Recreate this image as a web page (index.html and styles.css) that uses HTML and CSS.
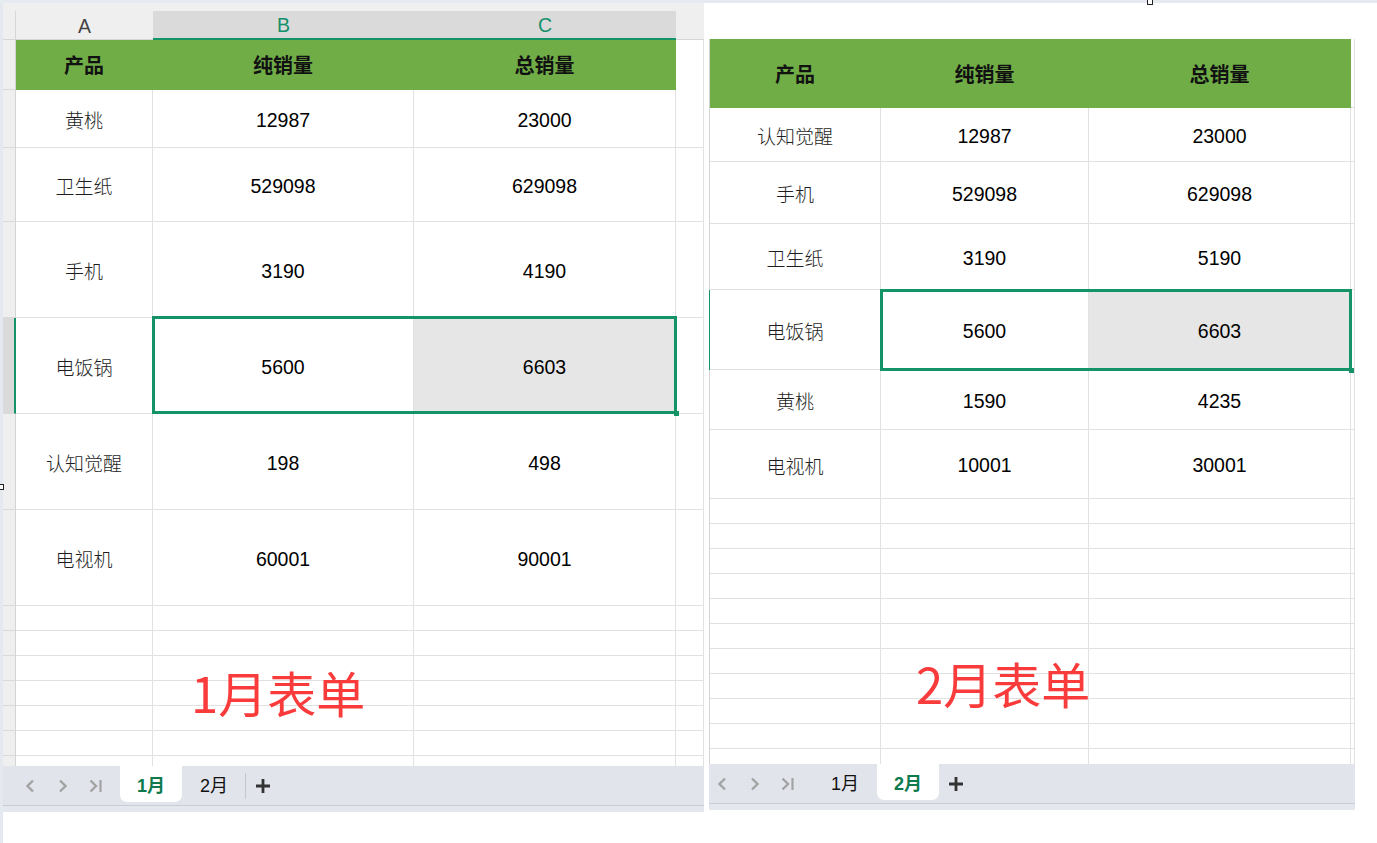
FILE: index.html
```html
<!DOCTYPE html>
<html lang="zh-CN">
<head>
<meta charset="utf-8">
<title>销量表单</title>
<link rel="stylesheet" href="styles.css">
</head>
<body>
<div class="topband"></div>
<div class="page">
  <section class="sheet sheet-left">
    <div class="colhead">
      <div class="ch corner"></div>
      <div class="ch">A</div>
      <div class="ch sel">B</div>
      <div class="ch sel">C</div>
      <div class="ch"></div>
    </div>
    <div class="grid grid-left">
      <div class="row h50 head">
        <div class="cell rh"></div><div class="cell g">产品</div><div class="cell g">纯销量</div><div class="cell g">总销量</div><div class="cell nb"></div>
      </div>
      <div class="row h58">
        <div class="cell rh"></div><div class="cell name">黄桃</div><div class="cell">12987</div><div class="cell">23000</div><div class="cell"></div>
      </div>
      <div class="row h74">
        <div class="cell rh"></div><div class="cell name">卫生纸</div><div class="cell">529098</div><div class="cell">629098</div><div class="cell"></div>
      </div>
      <div class="row h96">
        <div class="cell rh"></div><div class="cell name">手机</div><div class="cell">3190</div><div class="cell">4190</div><div class="cell"></div>
      </div>
      <div class="row h96">
        <div class="cell rh rh-sel"></div><div class="cell name">电饭锅</div><div class="cell">5600</div><div class="cell active">6603</div><div class="cell"></div>
      </div>
      <div class="row h96">
        <div class="cell rh"></div><div class="cell name">认知觉醒</div><div class="cell">198</div><div class="cell">498</div><div class="cell"></div>
      </div>
      <div class="row h96">
        <div class="cell rh"></div><div class="cell name">电视机</div><div class="cell">60001</div><div class="cell">90001</div><div class="cell"></div>
      </div>
      <div class="row h25"><div class="cell rh"></div><div class="cell"></div><div class="cell"></div><div class="cell"></div><div class="cell"></div></div>
      <div class="row h25"><div class="cell rh"></div><div class="cell"></div><div class="cell"></div><div class="cell"></div><div class="cell"></div></div>
      <div class="row h25"><div class="cell rh"></div><div class="cell"></div><div class="cell"></div><div class="cell"></div><div class="cell"></div></div>
      <div class="row h25"><div class="cell rh"></div><div class="cell"></div><div class="cell"></div><div class="cell"></div><div class="cell"></div></div>
      <div class="row h25"><div class="cell rh"></div><div class="cell"></div><div class="cell"></div><div class="cell"></div><div class="cell"></div></div>
      <div class="row h25"><div class="cell rh"></div><div class="cell"></div><div class="cell"></div><div class="cell"></div><div class="cell"></div></div>
      <div class="row h25"><div class="cell rh"></div><div class="cell"></div><div class="cell"></div><div class="cell"></div><div class="cell"></div></div>
      <div class="selection sel-left"><span class="fill-handle"></span></div>
      <div class="label label-left">1月表单</div>
    </div>
    <div class="tabbar tabbar-left">
      <div class="nav first"><svg width="12" height="14" viewBox="0 0 12 14"><path d="M9 1.5 L3.5 7 L9 12.5" fill="none" stroke="#a3a3a3" stroke-width="2.4"/></svg></div>
      <div class="nav"><svg width="12" height="14" viewBox="0 0 12 14"><path d="M3 1.5 L8.5 7 L3 12.5" fill="none" stroke="#a3a3a3" stroke-width="2.4"/></svg></div>
      <div class="nav"><svg width="14" height="14" viewBox="0 0 14 14"><path d="M1.5 1.5 L7 7 L1.5 12.5" fill="none" stroke="#a3a3a3" stroke-width="2.4"/><path d="M11.5 1 V13" stroke="#a3a3a3" stroke-width="2.2"/></svg></div>
      <div class="tab active-tab tab-first">1月</div>
      <div class="tab">2月</div>
      <div class="sep"></div>
      <div class="add"><svg width="16" height="16" viewBox="0 0 16 16"><path d="M8 1 V15 M1 8 H15" stroke="#333" stroke-width="2.8"/></svg></div>
    </div>
    <div class="tabstrip"></div>
  </section>

  <section class="sheet sheet-right">
    <div class="topspace"></div>
    <div class="grid grid-right">
      <div class="row h69 head">
        <div class="cell rh"></div><div class="cell g">产品</div><div class="cell g">纯销量</div><div class="cell g">总销量</div><div class="cell"></div>
      </div>
      <div class="row h54">
        <div class="cell rh"></div><div class="cell name">认知觉醒</div><div class="cell">12987</div><div class="cell">23000</div><div class="cell"></div>
      </div>
      <div class="row h62">
        <div class="cell rh"></div><div class="cell name">手机</div><div class="cell">529098</div><div class="cell">629098</div><div class="cell"></div>
      </div>
      <div class="row h66">
        <div class="cell rh"></div><div class="cell name">卫生纸</div><div class="cell">3190</div><div class="cell">5190</div><div class="cell"></div>
      </div>
      <div class="row h80">
        <div class="cell rh rh-sel"></div><div class="cell name">电饭锅</div><div class="cell">5600</div><div class="cell active">6603</div><div class="cell"></div>
      </div>
      <div class="row h60">
        <div class="cell rh"></div><div class="cell name">黄桃</div><div class="cell">1590</div><div class="cell">4235</div><div class="cell"></div>
      </div>
      <div class="row h69">
        <div class="cell rh"></div><div class="cell name">电视机</div><div class="cell">10001</div><div class="cell">30001</div><div class="cell"></div>
      </div>
      <div class="row h25"><div class="cell rh"></div><div class="cell"></div><div class="cell"></div><div class="cell"></div><div class="cell"></div></div>
      <div class="row h25"><div class="cell rh"></div><div class="cell"></div><div class="cell"></div><div class="cell"></div><div class="cell"></div></div>
      <div class="row h25"><div class="cell rh"></div><div class="cell"></div><div class="cell"></div><div class="cell"></div><div class="cell"></div></div>
      <div class="row h25"><div class="cell rh"></div><div class="cell"></div><div class="cell"></div><div class="cell"></div><div class="cell"></div></div>
      <div class="row h25"><div class="cell rh"></div><div class="cell"></div><div class="cell"></div><div class="cell"></div><div class="cell"></div></div>
      <div class="row h25"><div class="cell rh"></div><div class="cell"></div><div class="cell"></div><div class="cell"></div><div class="cell"></div></div>
      <div class="row h25"><div class="cell rh"></div><div class="cell"></div><div class="cell"></div><div class="cell"></div><div class="cell"></div></div>
      <div class="row h25"><div class="cell rh"></div><div class="cell"></div><div class="cell"></div><div class="cell"></div><div class="cell"></div></div>
      <div class="row h25"><div class="cell rh"></div><div class="cell"></div><div class="cell"></div><div class="cell"></div><div class="cell"></div></div>
      <div class="row h25"><div class="cell rh"></div><div class="cell"></div><div class="cell"></div><div class="cell"></div><div class="cell"></div></div>
      <div class="row h25"><div class="cell rh"></div><div class="cell"></div><div class="cell"></div><div class="cell"></div><div class="cell"></div></div>
      <div class="selection sel-right"><span class="fill-handle"></span></div>
      <div class="label label-right">2月表单</div>
    </div>
    <div class="tabbar tabbar-right">
      <div class="nav first"><svg width="12" height="14" viewBox="0 0 12 14"><path d="M9 1.5 L3.5 7 L9 12.5" fill="none" stroke="#a3a3a3" stroke-width="2.4"/></svg></div>
      <div class="nav"><svg width="12" height="14" viewBox="0 0 12 14"><path d="M3 1.5 L8.5 7 L3 12.5" fill="none" stroke="#a3a3a3" stroke-width="2.4"/></svg></div>
      <div class="nav"><svg width="14" height="14" viewBox="0 0 14 14"><path d="M1.5 1.5 L7 7 L1.5 12.5" fill="none" stroke="#a3a3a3" stroke-width="2.4"/><path d="M11.5 1 V13" stroke="#a3a3a3" stroke-width="2.2"/></svg></div>
      <div class="tab tab-first">1月</div>
      <div class="tab active-tab">2月</div>
      <div class="add"><svg width="16" height="16" viewBox="0 0 16 16"><path d="M8 1 V15 M1 8 H15" stroke="#333" stroke-width="2.8"/></svg></div>
    </div>
    <div class="tabstrip"></div>
  </section>
</div>
<span class="mark mark-top"></span>
<span class="mark mark-left"></span>
</body>
</html>
```

FILE: styles.css
```css
* { box-sizing: border-box; }

html, body {
  margin: 0;
  padding: 0;
}

body {
  width: 1377px;
  height: 843px;
  overflow: hidden;
  position: relative;
  background: #ffffff;
  font-family: "Liberation Sans", "Noto Sans CJK SC", sans-serif;
  color: #000;
}

.topband {
  height: 3px;
  background: #e6ebf1;
}

.page {
  display: flex;
  height: 840px;
}

.sheet {
  display: flex;
  flex-direction: column;
}

.sheet-left {
  width: 704px;
  border-left: 3px solid #e4e9f0;
}

.sheet-right {
  width: 651px;
}

/* column header */
.colhead {
  height: 37px;
  padding-top: 8px;
  background: #efefef;
  display: grid;
  grid-template-columns: 13px 137px 261px 262px 28px;
}

.ch {
  display: flex;
  align-items: center;
  justify-content: center;
  padding-top: 2px;
  font-size: 19.5px;
  color: #444;
  border-bottom: 1px solid #d6d6d6;
}

.ch.corner {
  border-right: 1px solid #d6d6d6;
}

.ch.sel {
  background: #dadada;
  color: #14906a;
  border-bottom: 2px solid #149466;
}

.topspace {
  height: 36px;
}

/* grid */
.grid {
  position: relative;
  overflow: hidden;
}

.grid-left { height: 726px; }
.grid-right { height: 725px; }

.row { display: grid; }

.grid-left .row { grid-template-columns: 13px 137px 261px 262px 28px; }
.grid-right .row { grid-template-columns: 6px 171px 208px 262px 4px; }

.h25 { height: 25px; }
.h50 { height: 50px; }
.h54 { height: 54px; }
.h58 { height: 58px; }
.h60 { height: 60px; }
.h62 { height: 62px; }
.h66 { height: 66px; }
.h69 { height: 69px; }
.h74 { height: 74px; }
.h80 { height: 80px; }
.h96 { height: 96px; }

.cell {
  display: flex;
  align-items: center;
  justify-content: center;
  padding-top: 3px;
  border-right: 1px solid #e1e1e1;
  border-bottom: 1px solid #e1e1e1;
  font-size: 19.5px;
  color: #000;
  white-space: nowrap;
}

.cell.name {
  padding-top: 2px;
  font-size: 19px;
  font-weight: 300;
  color: #1e1e1e;
}

.cell.nb {
  border-bottom: none;
}

.cell.g {
  padding-top: 0;
  background: #70ad47;
  border-color: #70ad47;
  font-size: 20px;
  font-weight: 700;
  color: #111;
}

.cell.active {
  background: #e6e6e6;
  border-right-color: #d0d0d0;
}

.grid-left .rh {
  background: #efefef;
  border-right-color: #d4d4d4;
  border-bottom-color: #d9d9d9;
}

.grid-left .rh.rh-sel {
  background: #dadada;
  border-right: 2px solid #149466;
}

.grid-right .rh {
  background: #fff;
  border-bottom: none;
  border-right-color: #d4d4d4;
}

.grid-right .rh.rh-sel {
  border-right-color: #149466;
}

/* selection overlay */
.selection {
  position: absolute;
  border: 3px solid #149466;
  pointer-events: none;
}

.sel-left {
  left: 149px;
  top: 276px;
  width: 525px;
  height: 98px;
}

.sel-right {
  left: 176px;
  top: 250px;
  width: 472px;
  height: 82px;
}

.fill-handle {
  position: absolute;
  right: -5px;
  bottom: -5px;
  width: 5px;
  height: 5px;
  background: #149466;
}

/* labels */
.label {
  position: absolute;
  font-family: "Noto Sans CJK SC", sans-serif;
  font-size: 49px;
  line-height: 49px;
  color: #fa3b3b;
  white-space: nowrap;
}

.label-left {
  left: 188px;
  top: 627px;
}

.label-right {
  left: 212px;
  top: 619px;
}

/* tab bar */
.tabbar {
  height: 40px;
  background: #e1e4eb;
  border-bottom: 1px solid #c9cdd5;
  display: flex;
  align-items: center;
}

.tabbar-left {
  padding-left: 10px;
}

.tabbar-right {
  margin-left: 5px;
  width: 646px;
}

.tabstrip {
  height: 6px;
  background: #e4e7ed;
}

.sheet-right .tabstrip {
  margin-left: 5px;
  width: 646px;
}

.nav {
  width: 33px;
  height: 100%;
  display: flex;
  align-items: center;
  justify-content: center;
}

.tabbar-right .nav.first {
  margin-left: -4px;
}

.tab {
  width: 62px;
  align-self: stretch;
  margin-bottom: 3px;
  margin-left: 1px;
  display: flex;
  align-items: center;
  justify-content: center;
  font-size: 18px;
  color: #111;
  border-radius: 0 0 7px 7px;
}

.tabbar-left .tab-first { margin-left: 8px; }
.tabbar-right .tab-first { margin-left: 10px; }

.active-tab {
  background: #ffffff;
  color: #0d7a4e;
  font-weight: 700;
}

.sep {
  width: 1px;
  height: 26px;
  background: #c4c7cd;
}

.add {
  width: 34px;
  height: 100%;
  display: flex;
  align-items: center;
  justify-content: center;
}

/* screenshot handle marks */
.mark {
  position: absolute;
  width: 6px;
  height: 6px;
  border: 1px solid #222;
  background: #fff;
}

.mark-top {
  left: 1147px;
  top: -1px;
}

.mark-left {
  left: -2px;
  top: 484px;
}
```
